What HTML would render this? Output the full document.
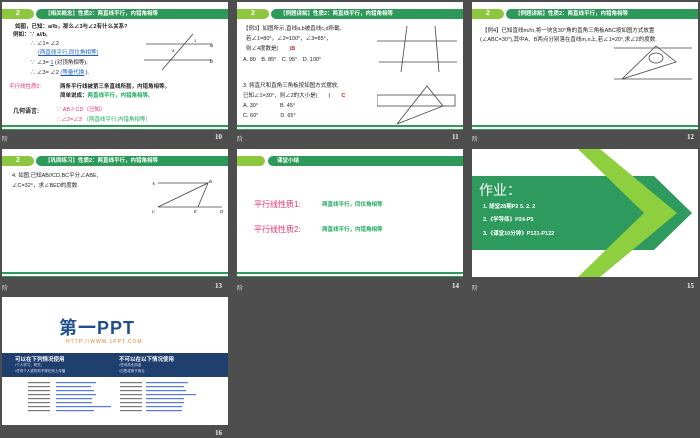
<!DOCTYPE html>
<html><head><meta charset="utf-8"><style>
*{margin:0;padding:0;box-sizing:border-box}
body{width:700px;height:438px;background:#4e4e4e;position:relative;overflow:hidden;font-family:"Liberation Sans","Noto Sans CJK SC",sans-serif}
.s{position:absolute;width:226px;height:128px;background:#fff;overflow:hidden}
.hd{position:absolute;left:0;top:7px;width:226px;height:10px}
.badge{position:absolute;left:0;top:0;width:32px;height:10px;background:#8dc63f;border-radius:0 5px 5px 0;color:#fff;font-size:7px;font-weight:bold;text-align:center;line-height:10px}
.band{position:absolute;left:34px;top:0;right:0;height:10px;background:#2e9a5a;border-radius:5px 0 0 5px;color:#fff;font-size:5.5px;line-height:10px;padding-left:9px;font-weight:bold}
.bl{position:absolute;left:0;right:0;bottom:3px;height:2px;background:#2e9a5a}
.bl2{position:absolute;left:0;right:0;bottom:0px;height:1px;background:#2e9a5a}
.t{position:absolute;font-size:5.5px;color:#222;white-space:nowrap}
.lab{position:absolute;font-size:6px;color:#ddd}
.num{position:absolute;font-size:7px;color:#eee;font-weight:bold;font-family:"Liberation Serif",serif}
svg{position:absolute}
</style></head><body>

<!-- slide 10 -->
<div class="s" style="left:2px;top:2px">
<div class="hd"><div class="badge">2</div><div class="band">【相关概念】性质2：两直线平行，内错角相等</div></div>
<div class="t" style="left:13px;top:20px;font-weight:bold">如图，已知：a//b，那么∠3与∠2有什么关系?</div>
<div class="t" style="left:11px;top:28px;font-weight:bold">例如：∵ a//b,</div>
<div class="t" style="left:28px;top:37px">∴ ∠1= ∠2</div>
<div class="t" style="left:36px;top:46px;color:#1a5fbf;text-decoration:underline">(两直线平行,同位角相等)</div>
<div class="t" style="left:28px;top:56px">∵ ∠3= <u style="color:#1a5fbf">1</u> (对顶角相等),</div>
<div class="t" style="left:28px;top:66px">∴ ∠3= ∠2 <u style="color:#1a5fbf">(等量代换</u> ).</div>
<div class="t" style="left:7px;top:80px;color:#e8336d">平行线性质2:</div>
<div class="t" style="left:58px;top:80px;font-weight:bold">两条平行线被第三条直线所截，内错角相等。</div>
<div class="t" style="left:58px;top:89px;font-weight:bold">简单说成：<span style="color:#1aaa5a">两直线平行，内错角相等。</span></div>
<div class="t" style="left:11px;top:104px;font-weight:bold;font-size:6px">几何语言:</div>
<div class="t" style="left:54px;top:103px;color:#e8336d">∵ AB∥CD（已知）</div>
<div class="t" style="left:54px;top:113px;color:#e8336d">∴∠2=∠3 <span style="color:#1aaa5a">（两直线平行,内错角相等）</span></div>
<svg style="left:140px;top:28px" width="75" height="42"><g stroke="#444" stroke-width="0.8" fill="none"><line x1="4" y1="14" x2="70" y2="14"/><line x1="2" y1="30" x2="70" y2="30"/><line x1="20" y1="40" x2="51" y2="4"/></g><text x="68" y="17" font-size="5">a</text><text x="68" y="33" font-size="5">b</text><text x="52" y="12" font-size="4">1</text><text x="30" y="22" font-size="4">3</text></svg>
<div class="bl"></div><div class="bl2"></div></div>
<div class="lab" style="left:2px;top:134px">阶</div><div class="num" style="left:215px;top:133px">10</div>

<!-- slide 11 -->
<div class="s" style="left:237px;top:2px">
<div class="hd"><div class="badge">2</div><div class="band">【例题讲解】性质2：两直线平行，内错角相等</div></div>
<div class="t" style="left:6px;top:22px">【例3】如图所示,直线a,b被直线c,d所截,</div>
<div class="t" style="left:9px;top:32px">若∠1=80°，∠2=100°，∠3=85°，</div>
<div class="t" style="left:9px;top:42px">则∠4度数是(　　)<span style="color:#e02020;font-weight:bold">B</span></div>
<div class="t" style="left:6px;top:53px">A. 80　B. 85°　C. 95°　D. 100°</div>
<div class="t" style="left:6px;top:79px">3. 将直尺和直角三角板按如图方式摆放,</div>
<div class="t" style="left:6px;top:89px">已知∠1=30°，则∠2的大小是(　　)　　<span style="color:#e02020;font-weight:bold">C</span></div>
<div class="t" style="left:6px;top:99px">A. 30°　　　　B. 45°</div>
<div class="t" style="left:6px;top:109px">C. 60°　　　　D. 65°</div>
<svg style="left:140px;top:22px" width="86" height="102"><g stroke="#444" stroke-width="0.8" fill="none"><line x1="0" y1="17" x2="80" y2="17"/><line x1="2" y1="38" x2="80" y2="38"/><line x1="30" y1="2" x2="24" y2="48"/><line x1="58" y1="2" x2="62" y2="48"/><rect x="0" y="71" width="78" height="11"/><polyline points="20,100 50,62 66,82 20,100"/></g></svg>
<div class="bl"></div><div class="bl2"></div></div>
<div class="lab" style="left:237px;top:134px">阶</div><div class="num" style="left:452px;top:133px">11</div>

<!-- slide 12 -->
<div class="s" style="left:472px;top:2px">
<div class="hd"><div class="badge">2</div><div class="band">【例题讲解】性质2：两直线平行，内错角相等</div></div>
<div class="t" style="left:10px;top:24px">【例4】已知直线m//n,将一块含30°角的直角三角板ABC按如图方式放置</div>
<div class="t" style="left:8px;top:33px">(∠ABC=30°),其中A、B两点分别落在直线m,n上,若∠1=20°,求∠2的度数.</div>
<svg style="left:140px;top:38px" width="86" height="50"><g stroke="#444" stroke-width="0.8" fill="none"><line x1="2" y1="8" x2="80" y2="8"/><line x1="2" y1="39" x2="80" y2="39"/><polyline points="10,39 44,6 64,22 10,39"/><ellipse cx="44" cy="18" rx="7" ry="5"/></g></svg>
<div class="bl"></div><div class="bl2"></div></div>
<div class="lab" style="left:472px;top:134px">阶</div><div class="num" style="left:687px;top:133px">12</div>

<!-- slide 13 -->
<div class="s" style="left:2px;top:149px">
<div class="hd"><div class="badge">2</div><div class="band">【巩固练习】性质2：两直线平行，内错角相等</div></div>
<div class="t" style="left:10px;top:22px">4. 如图,已知AB//CD,BC平分∠ABE,</div>
<div class="t" style="left:10px;top:32px">∠C=32°，求∠BED的度数.</div>
<svg style="left:148px;top:28px" width="76" height="38"><g stroke="#444" stroke-width="0.8" fill="none"><line x1="8" y1="6" x2="58" y2="6"/><line x1="8" y1="30" x2="72" y2="30"/><polyline points="8,30 58,6 48,30"/></g><g font-size="4.5" font-style="italic" font-family="Liberation Serif"><text x="2" y="8">A</text><text x="59" y="6">B</text><text x="2" y="36">C</text><text x="44" y="36">E</text><text x="70" y="36">D</text></g></svg>
<div class="bl"></div><div class="bl2"></div></div>
<div class="lab" style="left:2px;top:283px">阶</div><div class="num" style="left:215px;top:282px">13</div>

<!-- slide 14 -->
<div class="s" style="left:237px;top:149px">
<div class="hd"><div class="badge" style="width:28px"></div><div class="band" style="left:31px">课堂小结</div></div>
<div class="t" style="left:17px;top:50px;color:#e8336d;font-size:8px">平行线性质1:</div>
<div class="t" style="left:85px;top:51px;color:#1aaa5a;font-weight:bold">两直线平行，同位角相等</div>
<div class="t" style="left:17px;top:75px;color:#e8336d;font-size:8px">平行线性质2:</div>
<div class="t" style="left:85px;top:76px;color:#1aaa5a;font-weight:bold">两直线平行，内错角相等</div>
<div class="bl"></div><div class="bl2"></div></div>
<div class="lab" style="left:237px;top:283px">阶</div><div class="num" style="left:452px;top:282px">14</div>

<!-- slide 15 -->
<div class="s" style="left:472px;top:149px">
<svg style="left:0;top:0" width="226" height="128"><polygon points="0,27 182,27 220,64 182,101 0,101" fill="#2e9a5e"/><polygon points="106,0 128,0 205,64 128,128 106,128 172,64" fill="#8dcf3f"/></svg>
<div class="t" style="left:7px;top:31px;color:#fff;font-size:14px">作业：</div>
<div class="t" style="left:11px;top:53px;color:#fff;font-weight:bold">1. 随堂28期P2 5. 2. 2</div>
<div class="t" style="left:11px;top:66px;color:#fff;font-weight:bold">2.《学导练》P24-P5</div>
<div class="t" style="left:11px;top:80px;color:#fff;font-weight:bold">3.《课堂10分钟》P121-P122</div>
</div>
<div class="lab" style="left:472px;top:283px">阶</div><div class="num" style="left:687px;top:282px">15</div>

<!-- slide 16 -->
<div class="s" style="left:2px;top:297px">
<div class="t" style="left:57px;top:17px;font-size:18px;font-weight:bold;color:#1f4f8f;letter-spacing:1px">第一PPT</div>
<div class="t" style="left:64px;top:42px;font-size:5px;color:#e87a20;letter-spacing:1px">HTTP://WWW.1PPT.COM</div>
<div style="position:absolute;left:0;top:56px;width:226px;height:24px;background:#1f3f6f"></div>
<div class="t" style="left:13px;top:58px;color:#fff;font-weight:bold">可以在下列情况使用</div>
<div class="t" style="left:117px;top:58px;color:#fff;font-weight:bold">不可以在以下情况使用</div>
<div class="t" style="left:13px;top:66px;color:#dde;font-size:3.5px">•个人学习、研究。</div>
<div class="t" style="left:13px;top:72px;color:#dde;font-size:3.5px">•任何个人或机构不得在网上传播</div>
<div class="t" style="left:117px;top:66px;color:#dde;font-size:3.5px">•任何商业用途</div>
<div class="t" style="left:117px;top:72px;color:#dde;font-size:3.5px">•出售或用于商业</div>
<svg style="left:26px;top:85px" width="180" height="40"><g fill="#777"><rect x="0" y="0" width="22" height="1.2"/><rect x="0" y="4" width="22" height="1.2"/><rect x="0" y="8" width="22" height="1.2"/><rect x="0" y="12" width="22" height="1.2"/><rect x="0" y="16" width="22" height="1.2"/><rect x="0" y="20" width="22" height="1.2"/><rect x="0" y="24" width="22" height="1.2"/><rect x="0" y="28" width="22" height="1.2"/><rect x="92" y="0" width="22" height="1.2"/><rect x="92" y="4" width="22" height="1.2"/><rect x="92" y="8" width="22" height="1.2"/><rect x="92" y="12" width="22" height="1.2"/><rect x="92" y="16" width="22" height="1.2"/><rect x="92" y="20" width="22" height="1.2"/><rect x="92" y="24" width="22" height="1.2"/><rect x="92" y="28" width="22" height="1.2"/></g><g fill="#5577ee"><rect x="28" y="0" width="40" height="1.2"/><rect x="28" y="4" width="35" height="1.2"/><rect x="28" y="8" width="38" height="1.2"/><rect x="28" y="12" width="40" height="1.2"/><rect x="28" y="16" width="36" height="1.2"/><rect x="28" y="20" width="36" height="1.2"/><rect x="28" y="24" width="55" height="1.2"/><rect x="28" y="28" width="38" height="1.2"/><rect x="118" y="0" width="42" height="1.2"/><rect x="118" y="4" width="38" height="1.2"/><rect x="118" y="8" width="40" height="1.2"/><rect x="118" y="12" width="50" height="1.2"/><rect x="118" y="16" width="38" height="1.2"/><rect x="118" y="20" width="38" height="1.2"/><rect x="118" y="24" width="36" height="1.2"/><rect x="118" y="28" width="36" height="1.2"/></g></svg>
</div>
<div class="num" style="left:215px;top:429px">16</div>
</body></html>
